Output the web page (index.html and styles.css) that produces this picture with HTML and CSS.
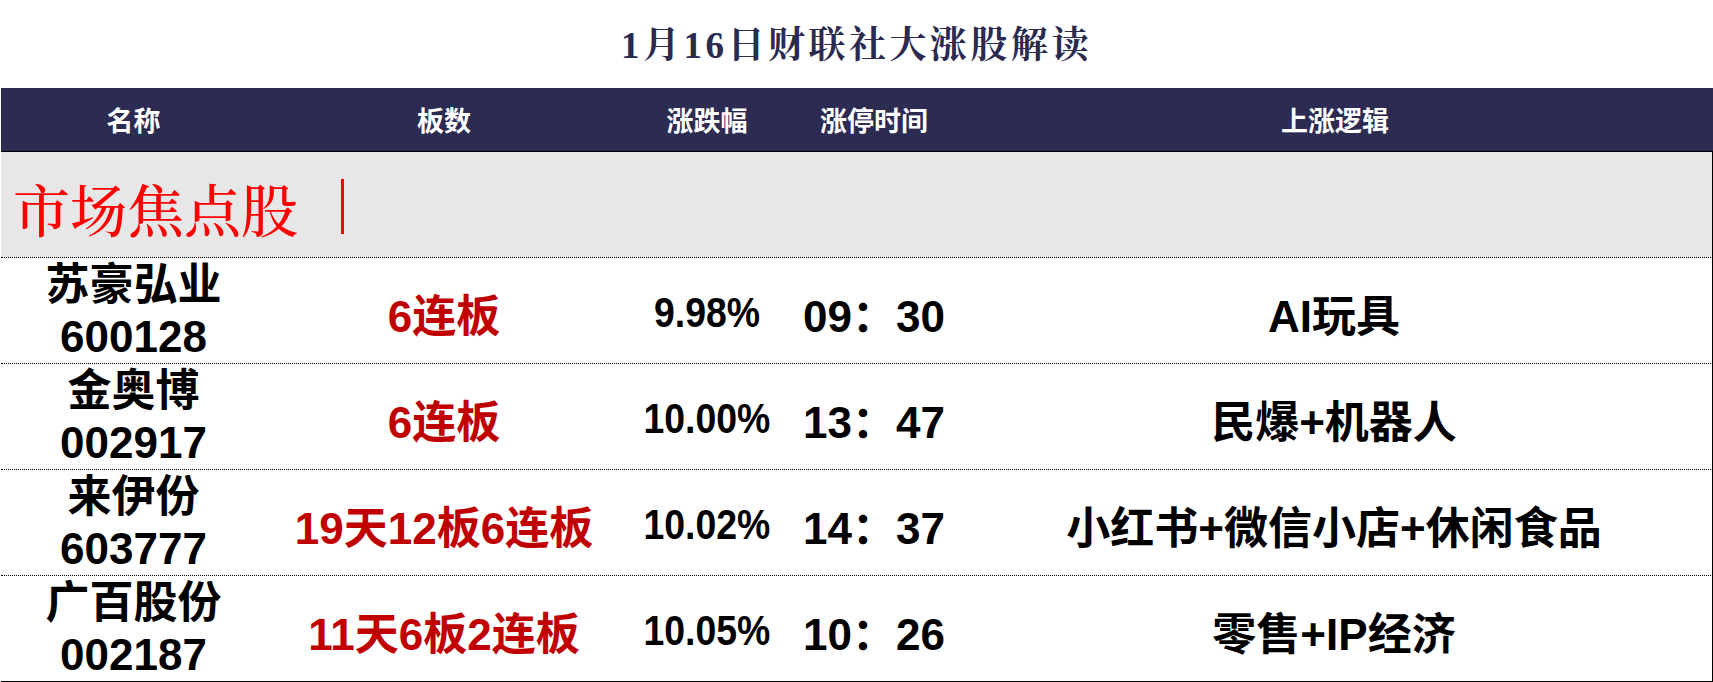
FILE: index.html
```html
<!DOCTYPE html>
<html lang="zh-CN">
<head>
<meta charset="utf-8">
<title>1月16日财联社大涨股解读</title>
<link rel="stylesheet" href="styles.css">
</head>
<body>
<div class="page">
  <h1 class="title">1月16日财联社大涨股解读</h1>
  <div class="table">
    <div class="row head">
      <div class="cell">名称</div>
      <div class="cell">板数</div>
      <div class="cell">涨跌幅</div>
      <div class="cell">涨停时间</div>
      <div class="cell">上涨逻辑</div>
    </div>
    <div class="section">
      <span class="section-text">市场焦点股</span><span class="section-bar"></span>
    </div>
    <div class="row item">
      <div class="cell name"><span>苏豪弘业</span><span>600128</span></div>
      <div class="cell boards">6连板</div>
      <div class="cell pct"><span class="narrow">9.98%</span></div>
      <div class="cell time">09：30</div>
      <div class="cell logic">AI玩具</div>
    </div>
    <div class="row item">
      <div class="cell name"><span>金奥博</span><span>002917</span></div>
      <div class="cell boards">6连板</div>
      <div class="cell pct"><span class="narrow">10.00%</span></div>
      <div class="cell time">13：47</div>
      <div class="cell logic">民爆+机器人</div>
    </div>
    <div class="row item">
      <div class="cell name"><span>来伊份</span><span>603777</span></div>
      <div class="cell boards">19天12板6连板</div>
      <div class="cell pct"><span class="narrow">10.02%</span></div>
      <div class="cell time">14：37</div>
      <div class="cell logic">小红书+微信小店+休闲食品</div>
    </div>
    <div class="row item last">
      <div class="cell name"><span>广百股份</span><span>002187</span></div>
      <div class="cell boards">11天6板2连板</div>
      <div class="cell pct"><span class="narrow">10.05%</span></div>
      <div class="cell time">10：26</div>
      <div class="cell logic">零售+IP经济</div>
    </div>
  </div>
</div>
</body>
</html>
```
FILE: styles.css
```css
html, body {
  margin: 0;
  padding: 0;
  background: #ffffff;
}

.page {
  width: 1713px;
  height: 682px;
  overflow: hidden;
}

.title {
  margin: 0;
  height: 88px;
  box-sizing: border-box;
  padding-top: 25px;
  text-align: center;
  font-family: "Liberation Serif", "Noto Serif CJK SC", "Noto Sans CJK SC", serif;
  font-size: 37px;
  line-height: 42px;
  font-weight: 700;
  letter-spacing: 3.5px;
  color: #2b2a50;
}

.table {
  margin-left: 1px;
  width: 1712px;
}

.row {
  display: grid;
  grid-template-columns: 265px 356px 170px 164px 1fr;
}

.cell {
  display: flex;
  align-items: center;
  justify-content: center;
  white-space: nowrap;
}

.head {
  height: 63px;
  background: #2c2b52;
  border-bottom: 1px solid #000000;
  margin-right: -1px;
  font-family: "Noto Sans CJK SC", sans-serif;
  font-weight: 700;
  font-size: 27px;
  color: #ffffff;
}

.section {
  height: 106px;
  box-sizing: border-box;
  background: #e7e7e7;
  border-right: 1px solid #000000;
  border-bottom: 1px dotted #000000;
  display: flex;
  align-items: center;
  padding-left: 12px;
  padding-top: 4px;
}

.section-text {
  font-family: "Noto Serif CJK SC", "Noto Sans CJK SC", serif;
  font-size: 57px;
  line-height: 60px;
  font-weight: 500;
  color: #ff0000;
}

.section-bar {
  width: 3px;
  height: 55px;
  margin-left: 43px;
  background: #ff0000;
}

.item {
  height: 106px;
  box-sizing: border-box;
  border-right: 1px solid #000000;
  border-bottom: 1px dotted #000000;
  font-family: "Liberation Sans", "Noto Sans CJK SC", sans-serif;
  font-weight: 700;
  font-size: 44px;
  color: #000000;
}

.item.last {
  border-bottom: 1px solid #000000;
}

.name {
  flex-direction: column;
  line-height: 52px;
}

.boards {
  color: #c00000;
  padding-top: 4px;
}

.pct {
  font-size: 43px;
  padding-top: 4px;
}

.narrow {
  display: inline-block;
  transform: scaleX(0.87);
}

.time {
  padding-top: 4px;
}

.logic {
  padding-top: 4px;
}
```
